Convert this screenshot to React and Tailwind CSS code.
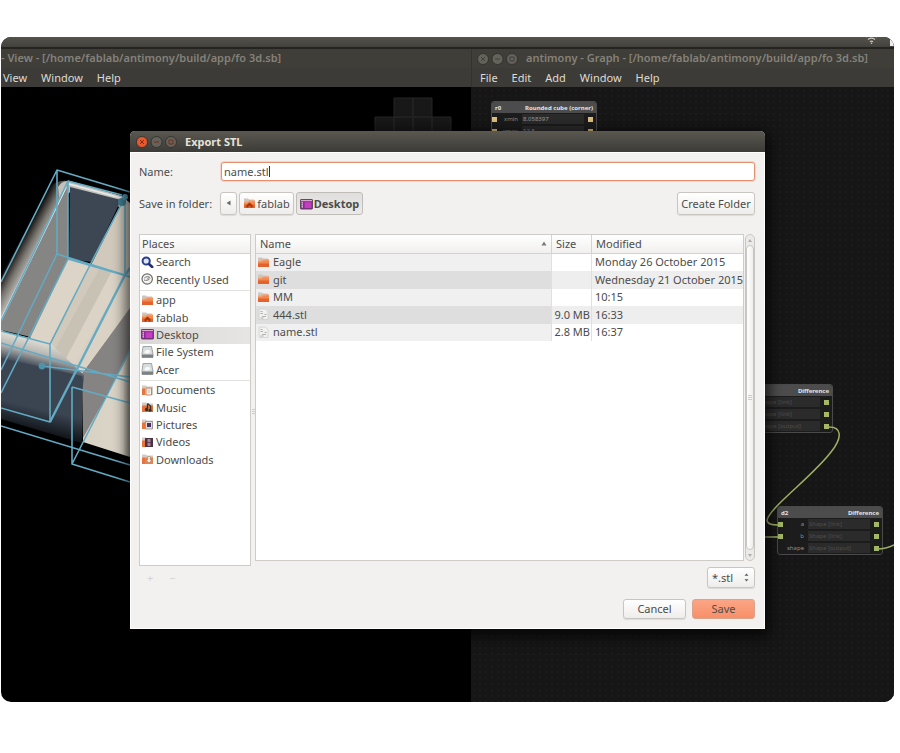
import { Fragment } from "react";

const fileMenu = ["File", "Edit", "Add", "Window", "Help"];
const viewMenu = ["View", "Window", "Help"];

const places = [
  [
    { name: "Search", icon: "search" },
    { name: "Recently Used", icon: "recent" },
  ],
  [
    { name: "app", icon: "folder" },
    { name: "fablab", icon: "home" },
    { name: "Desktop", icon: "desktop" },
    { name: "File System", icon: "disk" },
    { name: "Acer", icon: "disk" },
  ],
  [
    { name: "Documents", icon: "documents" },
    { name: "Music", icon: "music" },
    { name: "Pictures", icon: "pictures" },
    { name: "Videos", icon: "videos" },
    { name: "Downloads", icon: "downloads" },
  ],
];

const files = [
  { name: "Eagle", icon: "folder", size: "", modified: "Monday 26 October 2015" },
  { name: "git", icon: "folder", size: "", modified: "Wednesday 21 October 2015" },
  { name: "MM", icon: "folder", size: "", modified: "10:15" },
  { name: "444.stl", icon: "file", size: "9.0 MB", modified: "16:33" },
  { name: "name.stl", icon: "file", size: "2.8 MB", modified: "16:37" },
];

function FolderBase({ children }) {
  return (
    <>
      <path d="M1 1.5h4l1 1h5v5H1z" fill="#cfc6bd" />
      <path d="M1 11V5l4-.5 1-1h6V11z" fill="#f08a52" />
      <path d="M1 11V7.500h11V11z" fill="#e4622b" />
      <path d="M1.5 5.500 5.300 5l1-1h5.2" stroke="#f9b48c" strokeWidth="0.8" fill="none" />
      {children}
    </>
  );
}

function PlaceBase({ children }) {
  return (
    <>
      <path d="M1 1.5h4l1 1h6V11H1z" fill="#d3ccc6" />
      <path d="M1 4.5h3V11H1z" fill="#e8733c" />
      {children}
    </>
  );
}

const drawings = {
  search: (
    <>
      <circle cx="5.2" cy="5" r="3.6" fill="#dfe6f5" stroke="#2b3f8c" strokeWidth="2" />
      <path d="m8 8 3.2 3" stroke="#22316e" strokeWidth="2.6" strokeLinecap="round" />
    </>
  ),
  recent: (
    <>
      <circle cx="6.2" cy="6" r="5.2" fill="#f4f4f2" stroke="#6b6b6b" strokeWidth="1.2" />
      <path d="M3 7c2 .8 5 .3 6-1.600M3.200 5.200C4.500 3.600 7.500 3.200 9 4.500M6.200 6l2-1.500" stroke="#6b6b6b" strokeWidth="0.9" fill="none" />
    </>
  ),
  folder: <FolderBase />,
  home: (
    <FolderBase>
      <path d="M3.500 10.500V8.200L6.500 5.600l3 2.600v2.300H7.600V8.800H5.500v1.700z" fill="#a83208" />
    </FolderBase>
  ),
  desktop: (
    <>
      <rect x="0.500" y="1.500" width="12" height="9.500" rx="0.600" fill="#8a1f8f" stroke="#5d4a5e" />
      <path d="M1 2h11v1.200H1z" fill="#d9a5cf" />
      <path d="M1.500 4.200h1.600v1.200H1.500zm0 2h1.600v1.200H1.500zm0 2h1.600v1.200H1.500z" fill="#f3d5ee" />
      <path d="M4.500 4.200h7V10h-7z" fill="#c13fc0" />
    </>
  ),
  disk: (
    <>
      <path d="M2 .5h8.500l1.500 7.500v3.500H1V8z" fill="#d9dcdd" stroke="#8d9295" strokeWidth="0.800" />
      <path d="M1 8.500h11v3H1z" fill="#7c8184" />
      <path d="M3.300 6.800c.5-3.500 4.500-4 6-1.500-.5 2-2 2.200-4 2.300z" fill="#f7f8f8" />
    </>
  ),
  documents: (
    <PlaceBase>
      <path d="M5 4h5.500v7H5z" fill="#f3efe9" stroke="#b7723f" strokeWidth="0.800" />
      <path d="M6.500 6h2.500M6.500 8h2.500" stroke="#b9aea4" strokeWidth="0.700" />
    </PlaceBase>
  ),
  music: (
    <PlaceBase>
      <path d="M4 4.500h8V11H4z" fill="#d4703a" />
      <path d="M6.500 2.500v5M6.500 2.500l3 2.500v4" stroke="#38302c" strokeWidth="1.300" fill="none" />
      <circle cx="5.600" cy="8.500" r="1.700" fill="#38302c" />
      <circle cx="9" cy="9.300" r="1.500" fill="#38302c" />
    </PlaceBase>
  ),
  pictures: (
    <PlaceBase>
      <path d="M4.500 3.500h7V11h-7z" fill="#dcdcdc" stroke="#8b8b8b" strokeWidth="0.800" />
      <path d="M6 5h4v4H6z" fill="#4a3160" />
    </PlaceBase>
  ),
  videos: (
    <PlaceBase>
      <path d="M4 2h8v9H4z" fill="#4d3144" />
      <path d="M6.500 3h3v3.200h-3zm0 4h3v3h-3z" fill="#a58698" />
    </PlaceBase>
  ),
  downloads: (
    <PlaceBase>
      <path d="M4 4.500h8V11H4z" fill="#e58352" />
      <path d="M6.700 3.500h2.600V7h1.700L8 10 5 7h1.700z" fill="#f6f1ea" stroke="#a97a58" strokeWidth="0.600" />
    </PlaceBase>
  ),
  file: (
    <>
      <path d="M2 1h6.500L11 3.500V11.500H2z" fill="#f1f1f0" stroke="#cfcfcd" strokeWidth="0.800" />
      <path d="M3.500 3.500h2M3.500 5.500h2.500M5 8.500h4M3.500 10h3M7.500 6.500h2" stroke="#a9a9a7" strokeWidth="0.900" />
    </>
  ),
};

function Icon({ name }) {
  return (
    <svg viewBox="0 0 13 12" className="h-3 w-[13px] shrink-0" aria-hidden="true">
      {drawings[name]}
    </svg>
  );
}

function WindowButtons({ active }) {
  const close = active ? "#e9592f" : "#64625b";
  return (
    <svg viewBox="0 0 41 12" className="h-3 w-[41px] shrink-0" aria-hidden="true">
      <g stroke="#2f2e2a" strokeWidth="0.8">
        <circle cx="6" cy="6" r="5.500" fill={close} />
        <circle cx="20.500" cy="6" r="5.500" fill="#64625b" />
        <circle cx="35" cy="6" r="5.500" fill="#64625b" />
      </g>
      <path
        d="m4 4 4 4m0-4L4 8M18 6h5M33 4h4v4h-4z"
        fill="none"
        stroke={active ? "#7a2c14" : "#403f3a"}
        strokeWidth="1"
      />
    </svg>
  );
}

function MenuBar({ items, className }) {
  return (
    <nav className={"flex h-[19px] items-center gap-[14px] pt-[2px] text-[11px] text-[#dfdbd2] " + className}>
      {items.map((item) => (
        <button key={item} type="button">
          {item}
        </button>
      ))}
    </nav>
  );
}

function Model() {
  return (
    <svg viewBox="1 87 470 615" className="block h-[615px] w-[470px]" aria-hidden="true">
      <defs>
        <linearGradient id="edge" gradientUnits="userSpaceOnUse" x1="24" y1="232" x2="44" y2="243">
          <stop offset="0" stopColor="#000" />
          <stop offset="0.500" stopColor="#77736d" />
          <stop offset="1" stopColor="#c9c7c2" />
        </linearGradient>
        <linearGradient id="rim" gradientUnits="userSpaceOnUse" x1="44" y1="344" x2="38" y2="368">
          <stop offset="0" stopColor="#d9d6ce" />
          <stop offset="0.400" stopColor="#b9b8b4" />
          <stop offset="1" stopColor="#3d4653" />
        </linearGradient>
        <linearGradient id="front" gradientUnits="userSpaceOnUse" x1="46" y1="410" x2="41" y2="431">
          <stop offset="0" stopColor="#3b4552" />
          <stop offset="1" stopColor="#14181d" />
        </linearGradient>
        <linearGradient id="corner" x1="0" x2="1" y1="0" y2="0">
          <stop offset="0" stopColor="#d8d2c5" />
          <stop offset="0.850" stopColor="#dbd5c8" />
          <stop offset="1" stopColor="#a49f95" />
        </linearGradient>
      </defs>
      <path
        d="M394 98h19v19h-19zM413 98h19v19h-19zM375 117h19v19h-19zM394 117h19v19h-19zM413 117h19v19h-19zM432 117h19v19h-19z"
        fill="#181818"
        stroke="#242424"
      />
      <path d="M1 270 46 190Q56 179 68 181V200L1 335z" fill="url(#edge)" />
      <path d="M58 187Q62 180 70 181L122 196 130 203V210L70 192 60 205z" fill="#c2c0bb" />
      <path d="M68 184V260L31 337 1 330V322z" fill="#858584" />
      <path d="M70 187 121 200 92 262 69 259z" fill="#3d4754" />
      <path d="M68 259 92 265 50 345V364L30 338z" fill="#dbd4c7" />
      <path d="M92 263 122 203 130 205V310L82 374 50 364V345z" fill="#d1cabc" />
      <path d="M100 268 112 271 62 366 50 363V358z" fill="#c8c2b5" />
      <path d="M112 271 125 275 72 370 62 366z" fill="#dad3c6" />
      <path d="M130 277V308L82 374 72 370 125 277z" fill="#d9d2c5" />
      <path d="M130 308V350L83 440 82 374z" fill="#868482" />
      <path d="M130 349V457L83 442V438L108 393z" fill="url(#corner)" />
      <path d="M1 331 50 343 84 375 82 395 1 369z" fill="url(#rim)" />
      <path d="M1 358 50 369 82 376V443L1 419z" fill="url(#front)" />
      <path d="M69 184 121 198M66 187 1 320" stroke="#e6ebea" strokeWidth="1.800" fill="none" />
      <g stroke="#63aac4" strokeWidth="1.600" fill="none" strokeLinejoin="round">
        <path d="M1 282 57 170 130 192M57 170V254L1 370M1 321 68 181V259L1 393M57 254 125 275V195M68 259 130 277" />
        <path d="M68 181 122 195M122 203 90 265 50 344V422L1 408M50 344 1 331M1 343 130 382M42 366 130 377" />
        <path d="M72 387 130 403M130 465 1 426M130 350 72 464 130 482M72 387V464" />
        <path d="M50 422 125 275 130 268" strokeWidth="2.400" />
      </g>
      <circle cx="42" cy="366" r="3.400" fill="#4f93ab" />
      <circle cx="122" cy="202" r="4" fill="#3f7f96" />
      <circle cx="125" cy="197" r="3" fill="#4f93ab" />
    </svg>
  );
}

function GraphNode({ id, title, rows, tone, valueTone, className }) {
  return (
    <section
      className={"absolute w-[106px] overflow-hidden rounded-[3px] border border-[#4a4a4a] bg-[#1c1c1c] text-[6px] leading-none " + className}
    >
      <h2 className="flex h-[11px] items-center justify-between bg-[#4c4c4c] px-[3px] font-bold text-[#e4e4e4]">
        <span>{id}</span>
        <span>{title}</span>
      </h2>
      {rows.map((row) => (
        <div key={row.label} className="flex h-3 items-center gap-1">
          <i className={"size-[5px] " + (row.input ? tone : "bg-transparent")} />
          <span className="w-[17px] text-right text-[#8c8c8c]">{row.label}</span>
          <span className={"h-[10px] flex-1 bg-[#2b2b2b] px-px pt-[2px] " + valueTone}>{row.value}</span>
          <i className={"mr-[3px] size-[5px] " + tone} />
        </div>
      ))}
    </section>
  );
}

const shapeRows = [
  { label: "a", value: "Shape [link]", input: true },
  { label: "b", value: "Shape [link]", input: true },
  { label: "shape", value: "Shape [output]", input: false },
];

const cubeRows = [
  { label: "xmin", value: "8.058397", input: true },
  { label: "xmax", value: "12.5", input: true },
  { label: "ymin", value: "0.0", input: true },
];

function Graph() {
  return (
    <div className="relative flex-1 overflow-hidden bg-[#161616] bg-[radial-gradient(#1b1b1b_1px,transparent_1px)] bg-[size:6px_6px]">
      <GraphNode
        id="r0"
        title="Rounded cube (corner)"
        rows={cubeRows}
        tone="bg-[#e0bf7c]"
        valueTone="text-[#9a9a9a]"
        className="left-5 top-[14px]"
      />
      <GraphNode
        id="d1"
        title="Difference"
        rows={shapeRows}
        tone="bg-[#a3b765]"
        valueTone="text-[#4d4d4d]"
        className="left-[256px] top-[297px]"
      />
      <GraphNode
        id="d2"
        title="Difference"
        rows={shapeRows}
        tone="bg-[#a3b765]"
        valueTone="text-[#4d4d4d]"
        className="left-[306px] top-[419px]"
      />
      <svg viewBox="471 87 423 615" className="absolute left-0 top-0 h-[615px] w-[423px]" aria-hidden="true">
        <path
          d="M827 427C842 426 843 437 831 452 812 477 771 506 767 520 767 524 771 525 779 525M764 537H779M877 549C884 549 888 548 894 545"
          fill="none"
          stroke="#a0b066"
          strokeWidth="1.500"
        />
      </svg>
    </div>
  );
}

const buttonLook =
  "rounded-[3px] border border-[#c9c6c2] bg-linear-to-b from-white to-[#eeedeb] pb-px shadow-[0_1px_1px_#dddbd8]";

function PlacesList() {
  return (
    <div className="h-[332px] border border-[#cfccc8] bg-white">
      <h2 className="flex h-[19px] items-center border-b border-[#d6d3cf] bg-linear-to-b from-white to-[#f1f0ee] px-[2px] pb-px">
        Places
      </h2>
      {places.map((group, index) => (
        <Fragment key={group[0].name}>
          {index > 0 && <hr className="my-px border-[#e3e1de]" />}
          <ul className={index === 0 ? "grid h-[35px] auto-rows-fr" : "grid h-[87px] auto-rows-fr"}>
            {group.map((place) => (
              <li key={place.name} className="grid">
                <button
                  type="button"
                  className={
                    "flex items-center gap-[2px] px-px pb-[2px] text-left leading-none " +
                    (place.name === "Desktop" ? "bg-linear-to-r from-[#dad9d8] to-[#e6e5e4]" : "")
                  }
                >
                  <Icon name={place.icon} />
                  {place.name}
                </button>
              </li>
            ))}
          </ul>
        </Fragment>
      ))}
    </div>
  );
}

function FileTable() {
  const head =
    "h-[19px] border-b border-[#d6d3cf] bg-linear-to-b from-white to-[#f1f0ee] px-1 pb-px text-left font-normal";
  return (
    <div className="min-w-0 flex-1 border border-[#cfccc8] bg-white">
      <table className="w-full table-fixed border-separate border-spacing-0 leading-none">
        <thead>
          <tr>
            <th className={head + " border-r"}>
              <span className="flex items-center justify-between">
                Name
                <svg viewBox="0 0 6 5" className="h-[5px] w-[6px]" aria-hidden="true">
                  <path d="M3 .5 5.500 4.500h-5z" fill="#7c7a76" />
                </svg>
              </span>
            </th>
            <th className={head + " w-10 border-r"}>Size</th>
            <th className={head + " w-[151px]"}>Modified</th>
          </tr>
        </thead>
        <tbody>
          {files.map((file) => (
            <tr key={file.name} className="group odd:h-[17px] even:h-[18px]">
              <td className="border-r border-[#e2e0de] bg-[#f0f0f0] p-0 pb-[2px] group-even:bg-[#dedede]">
                <span className="flex items-center gap-[3px] pl-px">
                  <Icon name={file.icon} />
                  {file.name}
                </span>
              </td>
              <td className="whitespace-nowrap border-r border-[#e2e0de] p-0 pb-[2px] pr-px text-right group-even:bg-[#eeeeee]">
                {file.size}
              </td>
              <td className="whitespace-nowrap p-0 pb-[2px] pl-[3px] group-even:bg-[#eeeeee]">{file.modified}</td>
            </tr>
          ))}
        </tbody>
      </table>
    </div>
  );
}

function ScrollBar() {
  return (
    <div className="flex w-[10px] flex-col items-center rounded-full border border-[#c9c6c2] bg-[#eceae8]" aria-hidden="true">
      <svg viewBox="0 0 8 10" className="h-[10px] w-2">
        <path d="M4 4 6 7H2z" fill="#b0ada8" />
      </svg>
      <div className="flex w-2 flex-1 flex-col items-center justify-center gap-px rounded-full border border-[#c9c6c2] bg-linear-to-r from-white to-[#efeeec]">
        <i className="h-px w-1 bg-[#cfccc8]" />
        <i className="h-px w-1 bg-[#cfccc8]" />
        <i className="h-px w-1 bg-[#cfccc8]" />
      </div>
      <svg viewBox="0 0 8 10" className="h-[10px] w-2">
        <path d="M4 7 6 4H2z" fill="#b0ada8" />
      </svg>
    </div>
  );
}

function ExportDialog() {
  return (
    <section
      role="dialog"
      aria-label="Export STL"
      className="absolute left-[129px] top-[94px] w-[635px] rounded-t-[5px] bg-[#f2f1f0] text-[11px] leading-none text-[#4c4c4c] shadow-[0_4px_14px_4px_#000000b0]"
    >
      <header className="flex h-[21px] items-center gap-2 rounded-t-[5px] bg-linear-to-b from-[#5a5850] to-[#3c3b37] pl-[6px] font-bold text-[#e6e2d9]">
        <WindowButtons active />
        <h1>Export STL</h1>
      </header>
      <form className="border border-white py-[9px] pl-2 pr-[9px]">
        <div className="flex items-center">
          <label htmlFor="name" className="w-[82px]">
            Name:
          </label>
          <div className="relative flex-1">
            <input
              id="name"
              defaultValue="name.stl"
              className="block h-[19px] w-full rounded-[3px] border border-[#e3926f] bg-white px-[2px] shadow-[0_0_0_1px_#f6d3c4] outline-none"
            />
            <span className="absolute left-12 top-1 h-[11px] w-px bg-[#333]" />
          </div>
        </div>
        <div className="mt-[11px] flex h-[23px] items-stretch gap-[2px]">
          <span className="flex w-[79px] items-center">Save in folder:</span>
          <button type="button" aria-label="Back" className={"flex w-[17px] items-center justify-center " + buttonLook}>
            <svg viewBox="0 0 5 6" className="h-[6px] w-[5px]" aria-hidden="true">
              <path d="M.5 3 4.500.5v5z" fill="#6b6965" />
            </svg>
          </button>
          <button type="button" className={"flex w-[55px] items-center justify-center gap-px " + buttonLook}>
            <Icon name="home" />
            fablab
          </button>
          <button
            type="button"
            className="flex w-[67px] items-center justify-center gap-px rounded-[3px] border border-[#c0bdb9] bg-linear-to-b from-[#e0dfdd] to-[#eceae8] font-bold"
          >
            <Icon name="desktop" />
            Desktop
          </button>
          <button type="button" className={"ml-auto w-[78px] whitespace-nowrap " + buttonLook}>
            Create Folder
          </button>
        </div>
        <div className="mt-[19px] flex">
          <div className="w-28">
            <PlacesList />
            <div className="flex h-[22px] items-center gap-4 pl-2 text-[#d5d3d0]">
              <button type="button" disabled>
                +
              </button>
              <button type="button" disabled>
                −
              </button>
            </div>
          </div>
          <div className="flex h-[354px] w-1 flex-col items-center justify-center gap-px" aria-hidden="true">
            <i className="h-px w-[3px] bg-[#cfccc8]" />
            <i className="h-px w-[3px] bg-[#cfccc8]" />
            <i className="h-px w-[3px] bg-[#cfccc8]" />
          </div>
          <div className="flex min-w-0 flex-1 flex-col gap-[6px]">
            <div className="flex h-[327px] gap-px">
              <FileTable />
              <ScrollBar />
            </div>
            <div className="relative self-end">
              <select
                aria-label="File type"
                className={"block h-[21px] w-12 appearance-none px-[4px] leading-none " + buttonLook}
              >
                <option>*.stl</option>
              </select>
              <svg viewBox="0 0 5 9" className="pointer-events-none absolute right-[6px] top-[6px] h-[9px] w-[5px]" aria-hidden="true">
                <path d="M2.500.5 4.500 2.800h-4zM2.500 8.500l2-2.300h-4z" fill="#5d5b57" />
              </svg>
            </div>
          </div>
        </div>
        <div className="mt-[11px] flex h-5 justify-end gap-[6px]">
          <button type="button" className={"w-[63px] " + buttonLook}>
            Cancel
          </button>
          <button
            type="button"
            className="w-[63px] rounded-[3px] border border-[#d9a48d] bg-linear-to-b from-[#fba585] to-[#f88f69] pb-px"
          >
            Save
          </button>
        </div>
      </form>
    </section>
  );
}

export default function App() {
  return (
    <main className="bg-white pl-px pr-[6px] pt-[37px] font-['Noto_Sans','Open_Sans',sans-serif]">
      <div className="relative flex h-[665px] flex-col overflow-hidden rounded-[10px] bg-black">
        <div className="flex h-3 shrink-0 items-start justify-end gap-3 border-b-2 border-[#24231f] bg-linear-to-b from-[#55534c] to-[#42413c]">
          <svg viewBox="0 0 13 7" className="h-[7px] w-[13px]" aria-hidden="true">
            <path d="M1 0C4 -2 9 -2 12 0M3 2.500c2-1.500 5-1.500 7 0M5 4.700c1-.8 2-.8 3 0" stroke="#c9c6bf" strokeWidth="1.200" fill="none" />
            <circle cx="6.500" cy="6.200" r="0.800" fill="#c9c6bf" />
          </svg>
          <i className="h-[9px] w-1 bg-[#f0eeea]" />
        </div>
        <div className="flex flex-1">
          <section className="flex w-[470px] shrink-0 flex-col">
            <header className="flex h-[19px] items-center whitespace-nowrap bg-[#3f3e39] text-[11px] font-semibold text-[#85827a]">
              - View - [/home/fablab/antimony/build/app/fo 3d.sb]
            </header>
            <MenuBar items={viewMenu} className="bg-[#3c3b37] pl-[2px]" />
            <Model />
          </section>
          <section className="flex min-w-0 flex-1 flex-col">
            <header className="flex h-[19px] items-center gap-2 whitespace-nowrap border-l border-[#34332f] bg-[#3f3e39] pl-[5px] text-[11px] font-semibold text-[#85827a]">
              <WindowButtons />
              antimony - Graph - [/home/fablab/antimony/build/app/fo 3d.sb]
            </header>
            <MenuBar items={fileMenu} className="border-l border-[#34332f] bg-[#3c3b37] pl-2" />
            <Graph />
          </section>
        </div>
        <ExportDialog />
      </div>
    </main>
  );
}
